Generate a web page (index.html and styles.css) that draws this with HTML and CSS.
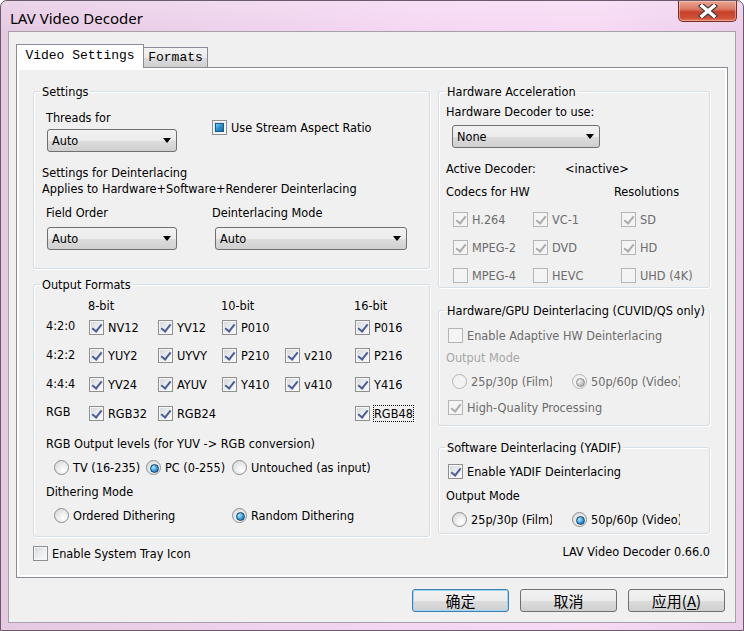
FILE: index.html
```html
<!DOCTYPE html>
<html>
<head>
<meta charset="utf-8">
<title>LAV Video Decoder</title>
<link rel="stylesheet" href="styles.css">
</head>
<body>
<div class="window">
  <div class="titlebar">
    <span class="title">LAV Video Decoder</span>
    <div class="close">
      <svg width="20" height="14" viewBox="0 0 20 14">
        <path d="M4 2 L16 12 M16 2 L4 12" stroke="#3c3c3c" stroke-width="5.6" stroke-linecap="square"/>
        <path d="M4 2 L16 12 M16 2 L4 12" stroke="#ffffff" stroke-width="3.4" stroke-linecap="square"/>
      </svg>
    </div>
  </div>
  <div class="client">
    <div class="tabs">
      <div class="tab active">Video Settings</div>
      <div class="tab">Formats</div>
    </div>
    <div class="panel">
      <div class="page">
        <div class="col left">
          <fieldset class="group g-settings">
            <legend>Settings</legend>
            <div class="s-row s-row1">
              <div class="s-a">
                <div class="lbl">Threads for</div>
                <div class="combo c-threads"><span>Auto</span></div>
              </div>
              <div class="s-b">
                <span class="cb"><span class="box ind"></span>Use Stream Aspect Ratio</span>
              </div>
            </div>
            <div class="deint-text">Settings for Deinterlacing<br>Applies to Hardware+Software+Renderer Deinterlacing</div>
            <div class="s-row s-row2">
              <div class="s-a">
                <div class="lbl">Field Order</div>
                <div class="combo c-field"><span>Auto</span></div>
              </div>
              <div class="s-b">
                <div class="lbl">Deinterlacing Mode</div>
                <div class="combo c-mode"><span>Auto</span></div>
              </div>
            </div>
          </fieldset>

          <fieldset class="group g-output">
            <legend>Output Formats</legend>
            <div class="fmt-grid">
              <span></span><span class="hdr">8-bit</span><span></span><span class="hdr">10-bit</span><span></span><span class="hdr">16-bit</span>

              <span class="rl">4:2:0</span>
              <span class="cb"><span class="box on"></span>NV12</span>
              <span class="cb"><span class="box on"></span>YV12</span>
              <span class="cb"><span class="box on"></span>P010</span>
              <span></span>
              <span class="cb"><span class="box on"></span>P016</span>

              <span class="rl">4:2:2</span>
              <span class="cb"><span class="box on"></span>YUY2</span>
              <span class="cb"><span class="box on"></span>UYVY</span>
              <span class="cb"><span class="box on"></span>P210</span>
              <span class="cb"><span class="box on"></span>v210</span>
              <span class="cb"><span class="box on"></span>P216</span>

              <span class="rl">4:4:4</span>
              <span class="cb"><span class="box on"></span>YV24</span>
              <span class="cb"><span class="box on"></span>AYUV</span>
              <span class="cb"><span class="box on"></span>Y410</span>
              <span class="cb"><span class="box on"></span>v410</span>
              <span class="cb"><span class="box on"></span>Y416</span>

              <span class="rl">RGB</span>
              <span class="cb"><span class="box on"></span>RGB32</span>
              <span class="cb"><span class="box on"></span>RGB24</span>
              <span></span>
              <span></span>
              <span class="cb"><span class="box on"></span><span class="focus">RGB48</span></span>
            </div>
            <div class="sub-lbl lv-lbl">RGB Output levels (for YUV -&gt; RGB conversion)</div>
            <div class="radio-row lv-row">
              <span class="rb rb-tv"><span class="radio"></span>TV (16-235)</span>
              <span class="rb rb-pc"><span class="radio on"></span>PC (0-255)</span>
              <span class="rb"><span class="radio"></span>Untouched (as input)</span>
            </div>
            <div class="sub-lbl dm-lbl">Dithering Mode</div>
            <div class="radio-row dm-row">
              <span class="rb rb-ord"><span class="radio"></span>Ordered Dithering</span>
              <span class="rb"><span class="radio on"></span>Random Dithering</span>
            </div>
          </fieldset>

          <div class="tray">
            <span class="cb"><span class="box"></span>Enable System Tray Icon</span>
          </div>
        </div>

        <div class="col right">
          <fieldset class="group g-hw">
            <legend>Hardware Acceleration</legend>
            <div class="hw-lbl">Hardware Decoder to use:</div>
            <div class="combo c-none"><span>None</span></div>
            <div class="hw-row hw-active"><span class="hw-k">Active Decoder:</span><span>&lt;inactive&gt;</span></div>
            <div class="hw-row hw-codecs"><span class="hw-k2">Codecs for HW</span><span>Resolutions</span></div>
            <div class="hw-grid">
              <span class="cb dis"><span class="box dis on"></span>H.264</span>
              <span class="cb dis"><span class="box dis on"></span>VC-1</span>
              <span class="cb dis"><span class="box dis on"></span>SD</span>
              <span class="cb dis"><span class="box dis on"></span>MPEG-2</span>
              <span class="cb dis"><span class="box dis on"></span>DVD</span>
              <span class="cb dis"><span class="box dis on"></span>HD</span>
              <span class="cb dis"><span class="box dis"></span>MPEG-4</span>
              <span class="cb dis"><span class="box dis"></span>HEVC</span>
              <span class="cb dis"><span class="box dis"></span>UHD (4K)</span>
            </div>
          </fieldset>

          <fieldset class="group g-gpu">
            <legend>Hardware/GPU Deinterlacing (CUVID/QS only)</legend>
            <div class="r-cb gpu-cb"><span class="cb dis"><span class="box dis"></span>Enable Adaptive HW Deinterlacing</span></div>
            <div class="r-lbl om-dis">Output Mode</div>
            <div class="r-radios gpu-radios">
              <span class="rb dis rb-film"><span class="radio dis"></span><span class="clip film">25p/30p (Film)</span></span>
              <span class="rb dis"><span class="radio dis on"></span><span class="clip video">50p/60p (Video)</span></span>
            </div>
            <div class="r-cb hq-cb"><span class="cb dis"><span class="box dis on"></span>High-Quality Processing</span></div>
          </fieldset>

          <fieldset class="group g-sw">
            <legend>Software Deinterlacing (YADIF)</legend>
            <div class="r-cb sw-cb"><span class="cb"><span class="box on"></span>Enable YADIF Deinterlacing</span></div>
            <div class="r-lbl sw-lbl">Output Mode</div>
            <div class="r-radios sw-radios">
              <span class="rb rb-film"><span class="radio"></span><span class="clip film">25p/30p (Film)</span></span>
              <span class="rb"><span class="radio on"></span><span class="clip video">50p/60p (Video)</span></span>
            </div>
          </fieldset>

          <div class="version">LAV Video Decoder 0.66.0</div>
        </div>
      </div>
    </div>
    <div class="buttons">
      <div class="btn default">确定</div>
      <div class="btn">取消</div>
      <div class="btn">应用(<u>A</u>)</div>
    </div>
  </div>
</div>
</body>
</html>
```
FILE: styles.css
```css
* { box-sizing: border-box; }
html, body { margin: 0; padding: 0; }
body {
  width: 744px;
  height: 631px;
  overflow: hidden;
  font-family: "DejaVu Sans Condensed", "DejaVu Sans", sans-serif;
  font-stretch: condensed;
  font-size: 12.6px;
  line-height: 15px;
  color: #000;
  background: #fff;
}

.window {
  width: 744px;
  height: 631px;
  border: 1px solid #6a5a6a;
  border-radius: 7px 7px 0 0;
  padding: 0 7px 7px 7px;
  display: flex;
  flex-direction: column;
  background:
    linear-gradient(180deg, rgba(255,255,255,0.22), rgba(255,255,255,0) 30px),
    linear-gradient(90deg, #e5c9e3 0%, #ecd0ea 25%, #f5d6f2 55%, #f7d9f4 80%, #ebcde9 100%);
}

.titlebar {
  height: 30px;
  flex: none;
  display: flex;
  justify-content: space-between;
  align-items: flex-start;
}
.title {
  margin: 9px 0 0 2px;
  font-family: "Noto Sans", "DejaVu Sans", sans-serif;
  font-stretch: normal;
  font-size: 15px;
  line-height: 17px;
}
.close {
  width: 59px;
  height: 21px;
  margin-right: -1px;
  border: 1px solid #7b2c22;
  border-top: none;
  border-radius: 0 0 5px 5px;
  background: linear-gradient(180deg, #e9a593 0%, #dc7a63 40%, #c7402a 55%, #cf5037 85%, #e07a5a 100%);
  box-shadow: inset 0 0 0 1px rgba(255,220,210,0.45);
  display: flex;
  align-items: center;
  justify-content: center;
}

.client {
  flex: 1;
  border: 1px solid #a7a0a6;
  background: #f0f0f0;
  padding: 12px 0 0 7px;
}

.tabs {
  display: flex;
  align-items: flex-end;
  height: 23px;
}
.tab {
  font-family: "Liberation Mono", monospace;
  font-stretch: normal;
  font-size: 13px;
  line-height: 18px;
  text-align: center;
  border: 1px solid #898c95;
  border-bottom: none;
  white-space: nowrap;
}
.tab.active {
  width: 128px;
  height: 24px;
  margin-bottom: -1px;
  padding-top: 2px;
  background: #fff;
  position: relative;
  z-index: 1;
}
.tab:not(.active) {
  width: 64px;
  height: 20px;
  padding-top: 1px;
  border-left: none;
  background: linear-gradient(180deg, #f3f3f3 0%, #ebebeb 50%, #dcdcdc 51%, #d0d0d0 100%);
}

.panel {
  width: 712px;
  height: 511px;
  border: 1px solid #898c95;
  background: #fff;
  padding: 2px;
}
.page {
  width: 100%;
  height: 100%;
  background: #f0f0f0;
  padding: 14px 14px 0 14px;
  display: flex;
  gap: 8px;
}
.col.left { width: 397px; }
.col.right { width: 272px; }

.group {
  margin: 0;
  padding: 0;
  min-inline-size: 0;
  border: 1px solid #d5dfe5;
  border-radius: 3px;
  box-shadow: 1px 1px 0 #fff, inset 1px 1px 0 #fff;
}
.group legend {
  margin-left: 6px;
  padding: 0 2px;
  line-height: 15px;
}

/* common controls */
.cb, .rb {
  display: inline-flex;
  align-items: center;
  gap: 4px;
  white-space: nowrap;
  height: 15px;
}
.cb.dis, .rb.dis { color: #6d6d6d; }
.box {
  position: relative;
  width: 15px;
  height: 15px;
  flex: none;
  border: 1px solid #8e8f8f;
  background: linear-gradient(135deg, #d3d6da 0%, #eceef0 55%, #fbfbfb 100%);
  box-shadow: inset 0 0 0 1px #f6f6f6;
}
.box.on::after {
  content: "";
  position: absolute;
  left: 4px;
  top: 1px;
  width: 4px;
  height: 8px;
  border: solid #4b5d99;
  border-width: 0 2px 2px 0;
  transform: rotate(38deg);
}
.box.ind::after {
  content: "";
  position: absolute;
  inset: 2px;
  border: 1px solid #1d5b8d;
  background: linear-gradient(135deg, #7fd0f5 0%, #2b93d2 45%, #146aa8 100%);
}
.box.dis {
  border-color: #b5b5b5;
  background: #f4f4f4;
  box-shadow: none;
}
.box.dis.on::after { border-color: #ababab; }

.radio {
  position: relative;
  width: 15px;
  height: 15px;
  flex: none;
  border-radius: 50%;
  border: 1px solid #8e8f8f;
  background: radial-gradient(circle at 65% 70%, #ffffff 0%, #eeeeee 40%, #d2d4d7 100%);
}
.radio.on::after {
  content: "";
  position: absolute;
  left: 3px;
  top: 3px;
  width: 7px;
  height: 7px;
  border-radius: 50%;
  border: 1px solid #17446f;
  background: radial-gradient(circle at 35% 35%, #b6ecff 0%, #3fa6e2 45%, #0e5a9c 100%);
}
.radio.dis {
  border-color: #b5b5b5;
  background: #f2f2f2;
}
.radio.dis.on::after {
  border-color: #8f8f8f;
  background: radial-gradient(circle at 35% 35%, #f2f2f2 0%, #c8c8c8 50%, #9a9a9a 100%);
}

.combo {
  height: 23px;
  border: 1px solid #707070;
  border-radius: 3px;
  background: linear-gradient(180deg, #f2f2f2 0%, #ebebeb 50%, #dddddd 51%, #cfcfcf 100%);
  padding: 0 5px 0 4px;
  display: flex;
  align-items: center;
  justify-content: space-between;
}
.combo::after {
  content: "";
  border-left: 4.5px solid transparent;
  border-right: 4.5px solid transparent;
  border-top: 5px solid #000;
}

/* settings group */
.g-settings { height: 185px; }
.s-row { display: flex; margin-left: 12px; }
.s-a { width: 166px; }
.s-row1 { margin-top: 11px; }
.c-threads { margin: 4px 0 0 1px; width: 130px; }
.s-b { display: flex; flex-direction: column; align-items: flex-start; }
.s-b .cb { margin-top: 10px; }
.deint-text { margin: 13px 0 0 8px; line-height: 16px; }
.s-row2 { margin-top: 8px; }
.c-field { margin: 7px 0 0 1px; width: 130px; }
.c-mode { margin: 7px 0 0 3px; width: 192px; }

/* output formats */
.g-output { height: 260px; margin-top: 8px; }
.fmt-grid {
  margin-top: 6px;
  padding-left: 12px;
  display: grid;
  grid-template-columns: 43px 69px 64px 63px 70px auto;
  grid-template-rows: 15px 28px 29px 29px 28px;
  align-items: center;
}
.hdr { margin-left: -1px; }
.rl { margin-top: -3px; }
.focus { outline: 1px dotted #000; outline-offset: 0; }
.sub-lbl { margin-left: 12px; }
.lv-lbl { margin-top: 9px; }
.radio-row { display: flex; padding-left: 20px; margin-top: 9px; }
.rb-tv { width: 92px; }
.rb-pc { width: 86px; }
.rb-ord { width: 178px; }
.dm-lbl { margin-top: 9px; }

.tray { display: flex; margin-top: 9px; }

/* right column */
.g-hw { height: 204px; }
.hw-lbl { margin: 5px 0 0 7px; }
.c-none { margin: 6px 0 0 13px; width: 148px; }
.hw-row { display: flex; margin-left: 7px; }
.hw-active { margin-top: 13px; }
.hw-k { width: 119px; }
.hw-codecs { margin-top: 8px; }
.hw-k2 { width: 168px; }
.hw-grid {
  margin: 13px 0 0 14px;
  display: grid;
  grid-template-columns: 80px 88px auto;
  grid-auto-rows: 15px;
  row-gap: 13px;
}

.g-gpu { height: 123px; margin-top: 15px; }
.r-cb { display: flex; margin-left: 9px; }
.gpu-cb { margin-top: 10px; }
.r-lbl { margin: 7px 0 0 7px; }
.om-dis { color: #a7a7a7; }
.r-radios { display: flex; margin: 9px 0 0 13px; }
.rb-film { width: 120px; }
.clip { overflow: hidden; white-space: nowrap; display: block; }
.clip.film { width: 81px; }
.clip.video { width: 89px; }
.hq-cb { margin-top: 11px; }

.g-sw { height: 94px; margin-top: 14px; }
.sw-cb { margin-top: 9px; }
.sw-lbl { margin-top: 9px; }
.sw-radios { margin-top: 9px; }

.version { margin-top: 10px; text-align: right; }

/* buttons */
.buttons {
  display: flex;
  justify-content: flex-end;
  gap: 11px;
  margin-top: 11px;
  padding-right: 10px;
}
.btn {
  width: 97px;
  height: 23px;
  border: 1px solid #707070;
  border-radius: 3px;
  background: linear-gradient(180deg, #f2f2f2 0%, #ebebeb 50%, #dddddd 51%, #cfcfcf 100%);
  font-family: "Noto Sans CJK SC", "Noto Sans", sans-serif;
  font-stretch: normal;
  font-size: 15px;
  line-height: 21px;
  text-align: center;
}
.btn.default {
  border-color: #3c7fb1;
  box-shadow: inset 0 0 0 1px #9fd5f5;
}
.btn u { text-underline-offset: 2px; }
```
